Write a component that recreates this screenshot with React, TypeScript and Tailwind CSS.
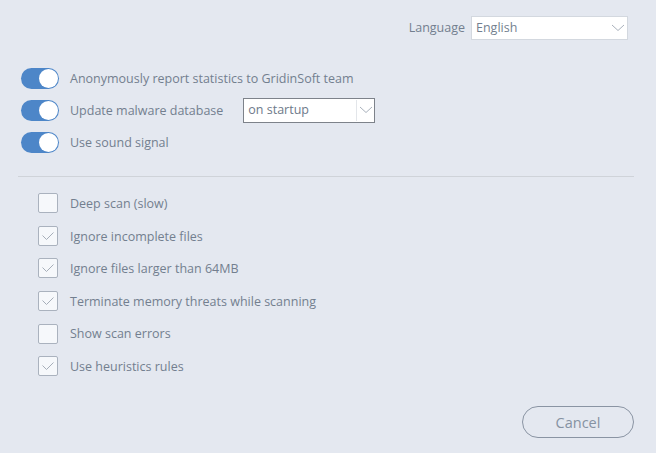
import React from "react";

const font = { fontFamily: '"Open Sans", "Noto Sans", sans-serif' };

function Toggle() {
  return (
    <div className="relative w-[38px] h-[21px] rounded-full bg-[#4d86c8] shrink-0">
      <div className="absolute right-[1px] top-[1px] w-[19px] h-[19px] rounded-full bg-white" />
    </div>
  );
}

function Chevron({ color = "#a9b1bc" }: { color?: string }) {
  return (
    <svg width="14" height="8" viewBox="0 0 14 8">
      <polyline points="1,1 7,6.5 13,1" fill="none" stroke={color} strokeWidth="1" />
    </svg>
  );
}

function Check({ checked }: { checked: boolean }) {
  return (
    <div className="w-[20px] h-[20px] rounded-[2px] border border-[#aab2be] bg-[#f6f8fb] flex items-center justify-center shrink-0">
      {checked && (
        <svg width="14" height="10" viewBox="0 0 14 10">
          <polyline points="1.5,4.5 5.5,8.5 12.5,1.5" fill="none" stroke="#a6aeb9" strokeWidth="1" />
        </svg>
      )}
    </div>
  );
}

export default function App() {
  const toggles = [
    "Anonymously report statistics to GridinSoft team",
    "Update malware database",
    "Use sound signal",
  ];
  const checks: [string, boolean][] = [
    ["Deep scan (slow)", false],
    ["Ignore incomplete files", true],
    ["Ignore files larger than 64MB", true],
    ["Terminate memory threats while scanning", true],
    ["Show scan errors", false],
    ["Use heuristics rules", true],
  ];
  return (
    <div
      className="relative w-[656px] h-[453px] bg-[#e4e8f0] flex flex-col text-[12.5px] text-[#737f8f] overflow-hidden"
      style={font}
    >
      <div className="flex justify-end items-center mt-[16px] pr-[28px] h-[24px]">
        <span className="mr-[6px] pt-[1px]">Language</span>
        <div className="w-[157px] h-[24px] bg-white border border-[#d3d8df] flex items-center justify-between pl-[4px] pr-[2px]">
          <span className="pt-[1px]">English</span>
          <Chevron />
        </div>
      </div>

      <div className="mt-[22px] pl-[21px] flex flex-col">
        {toggles.map((t, i) => (
          <div key={t} className="h-[32px] flex items-center">
            <Toggle />
            <span className="ml-[11px] pt-[2px]">{t}</span>
            {i === 1 && (
              <div className="ml-[20px] w-[132px] h-[25px] border border-[#7d828a] bg-white flex items-center">
                <span className="flex-1 pl-[4px] pt-[1px] text-[#6e7a8a]">on startup</span>
                <div className="w-px h-[21px] bg-[#e3e6ea]" />
                <div className="w-[17px] flex justify-center">
                  <Chevron />
                </div>
              </div>
            )}
          </div>
        ))}
      </div>

      <div className="mt-[18px] ml-[18px] w-[616px] h-px bg-[#cfd3d9]" />

      <div className="mt-[10px] pl-[38px] flex flex-col">
        {checks.map(([t, c]) => (
          <div key={t} className="h-[32.6px] flex items-center">
            <Check checked={c} />
            <span className="ml-[12px] pt-[2px]">{t}</span>
          </div>
        ))}
      </div>

      <div className="mt-auto mb-[15px] self-end mr-[22px] w-[112px] h-[32px] rounded-full border border-[#8a94a3] flex items-center justify-center text-[14.5px] text-[#8692a2] pt-[2px]">
        Cancel
      </div>
    </div>
  );
}
